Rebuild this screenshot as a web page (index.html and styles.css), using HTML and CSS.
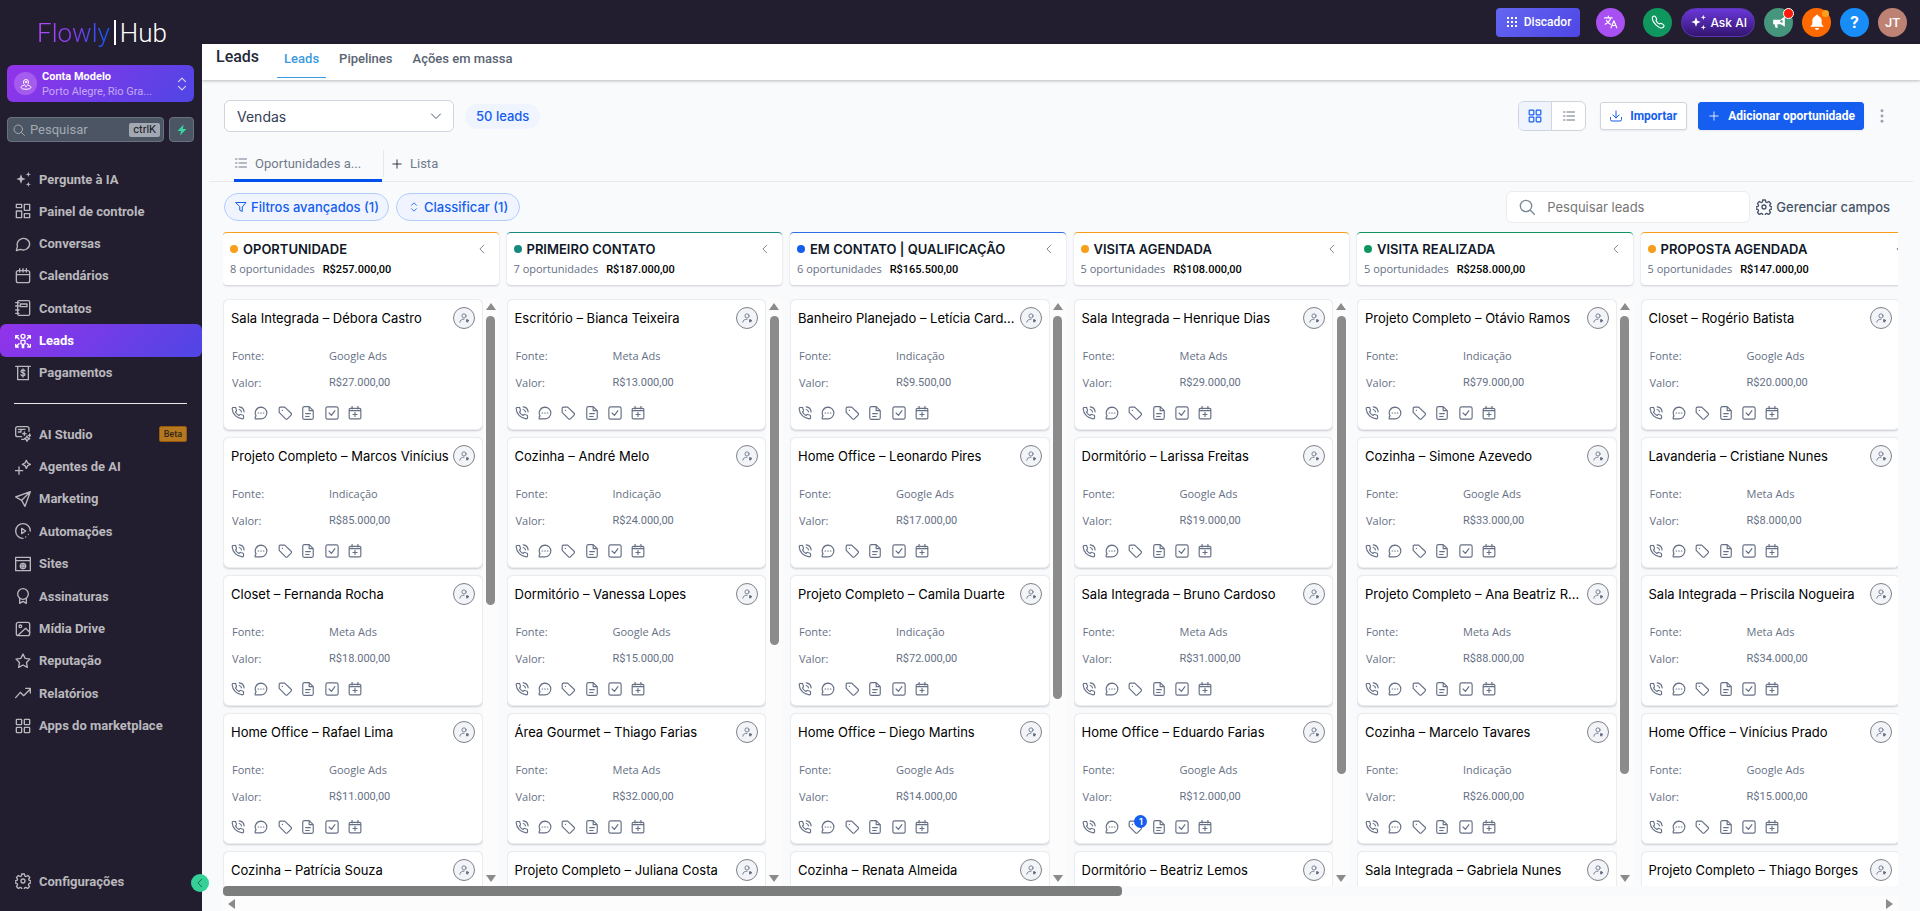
FILE: index.html
```html
<!DOCTYPE html>
<html lang="pt-br">
<head>
    <meta charset="UTF-8" />
    <meta name="viewport" content="width=device-width, initial-scale=1" />
    <title>Leads</title>
    <link rel="stylesheet" href="styles.css">
</head>
<body>
    <svg class="sprite" aria-hidden="true">
        <symbol id="i-sparkles" viewBox="0 0 24 24"><path class="solid" d="M9 5l2 5 5 2-5 2-2 5-2-5-5-2 5-2zM20 1l1 3 3 1-3 1-1 3-1-3-3-1 3-1zM20 16l1 3 3 1-3 1-1 3-1-3-3-1 3-1z"/></symbol>
        <symbol id="i-dashboard" viewBox="0 0 24 24"><path d="M2 2h8v5H2zM14 2h8v9h-8zM2 12h8v10H2zM14 16h8v6h-8z"/></symbol>
        <symbol id="i-chat" viewBox="0 0 24 24"><path d="M22 11.5a9.5 9.5 0 0 1-13.600 8.500L2 22l1.600-6A9.500 9.500 0 1 1 22 11.500z"/></symbol>
        <symbol id="i-calendar" viewBox="0 0 24 24"><path d="M5 4h14a3 3 0 0 1 3 3v12a3 3 0 0 1-3 3H5a3 3 0 0 1-3-3V7a3 3 0 0 1 3-3zM2 10h20M7 1v5M12 1v5M17 1v5"/></symbol>
        <symbol id="i-contacts" viewBox="0 0 24 24"><path d="M6 1h14a2 2 0 0 1 2 2v18a2 2 0 0 1-2 2H6a2 2 0 0 1-2-2V3a2 2 0 0 1 2-2zM8 6h10v4H8zM1 4h5M1 9h5M1 15h5M1 20h5"/></symbol>
        <symbol id="i-leads" viewBox="0 0 24 24"><circle cx="12" cy="5" r="3"/><path d="M9 11h6v5l-2 1v5h-2v-5l-2-1zM1 8V4h4M1 4l5 5M23 8V4h-4M23 4l-5 5M1 17v4h4M1 21l5-5M23 17v4h-4M23 21l-5-5"/></symbol>
        <symbol id="i-payments" viewBox="0 0 24 24"><path d="M1 2h22M4 2v20h16V2M15 9c-.5-1-1.500-1.500-3-1.500S9 8.300 9 9.600c0 3 6 1.600 6 4.500 0 1.300-1.200 2.200-3 2.200S9.500 15.600 9 14.500M12 6v12"/></symbol>
        <symbol id="i-studio" viewBox="0 0 24 24"><path d="M10 16H4a3 3 0 0 1-3-3V4a3 3 0 0 1 3-3h14a3 3 0 0 1 3 3v4M5 5h10M5 9h4v-4M18 15l1.300 2.700L22 19l-2.700 1.300L18 23l-1.300-2.700L14 19l2.700-1.300zM14 9v5M11.500 11.500h5M22 12v4M20 14h4M10 20h3"/></symbol>
        <symbol id="i-agents" viewBox="0 0 24 24"><path d="M17 2l2 4 4 2-4 2-2 4-2-4-4-2 4-2zM6 12v11M.500 17.500h11"/></symbol>
        <symbol id="i-send" viewBox="0 0 24 24"><path d="M23 1L1 9l9 5 5 9zM23 1L10 14"/></symbol>
        <symbol id="i-auto" viewBox="0 0 24 24"><path d="M12 23A11 11 0 1 1 23 12M10 8l6 4-6 4zM16 21l.1 0M20 17l.1 0"/></symbol>
        <symbol id="i-site" viewBox="0 0 24 24"><path d="M1 2h22v20H1zM1 7h22"/><circle cx="12" cy="15" r="4"/><path d="M8 15h8M12 11v8"/></symbol>
        <symbol id="i-award" viewBox="0 0 24 24"><circle cx="12" cy="9" r="8"/><path d="M7 16v7l5-3 5 3v-7"/></symbol>
        <symbol id="i-image" viewBox="0 0 24 24"><rect x="2" y="2" width="20" height="20" rx="3"/><circle cx="8" cy="8" r="2"/><path d="M5 21L16 11l6 6"/></symbol>
        <symbol id="i-star" viewBox="0 0 24 24"><path d="M12 1.500l3.200 6.600 7.300 1-5.300 5.100 1.300 7.300L12 18l-6.500 3.500 1.300-7.300L1.500 9.100l7.300-1z"/></symbol>
        <symbol id="i-trend" viewBox="0 0 24 24"><path d="M1 19l7-8 5 5L23 6M16 5h7v7"/></symbol>
        <symbol id="i-grid" viewBox="0 0 24 24"><rect x="2" y="2" width="8" height="8" rx="1"/><rect x="14" y="2" width="8" height="8" rx="1"/><rect x="2" y="14" width="8" height="8" rx="1"/><rect x="14" y="14" width="8" height="8" rx="1"/></symbol>
        <symbol id="i-gear" viewBox="0 0 24 24"><circle cx="12" cy="12" r="3"/><path d="M10 1.500h4l.7 3 2 .8 2.600-1.600 2.900 2.900-1.600 2.600.8 2 .1 0 2.500.8v3l-3 .7-.8 2 1.600 2.600-2.900 2.900-2.600-1.600-2 .8-.8 2.600h-3l-.8-2.600-2-.8-2.600 1.600-2.900-2.900 1.600-2.600-.8-2-3-.7v-3l3-.8.8-2-1.600-2.600 2.900-2.900 2.600 1.600 2-.8z"/></symbol>
        <symbol id="i-search" viewBox="0 0 24 24"><circle cx="10.500" cy="10.500" r="8.500"/><path d="M17 17l6 6"/></symbol>
        <symbol id="i-bolt" viewBox="0 0 24 24"><path class="solid" d="M15 1L3 14h7l-2 9L21 10h-7z"/></symbol>
        <symbol id="i-sort" viewBox="0 0 24 24"><path d="M6 8l6-6 6 6M6 16l6 6 6-6"/></symbol>
        <symbol id="i-pin" viewBox="0 0 24 24"><path d="M12 17c-3-3-5-5.500-5-9a5 5 0 0 1 10 0c0 3.500-2 6-5 9zM7 15c-3 .6-5 1.600-5 3.500C2 21 6 22.500 12 22.500s10-1.500 10-4c0-1.900-2-2.900-5-3.500"/><circle cx="12" cy="8" r="1.500"/></symbol>
        <symbol id="i-dots9" viewBox="0 0 24 24"><path class="solid" d="M2 2h4v4H2zM10 2h4v4h-4zM18 2h4v4h-4zM2 10h4v4H2zM10 10h4v4h-4zM18 10h4v4h-4zM2 18h4v4H2zM10 18h4v4h-4zM18 18h4v4h-4z"/></symbol>
        <symbol id="i-translate" viewBox="0 0 24 24"><path d="M1 5h13M7.500 2v3M11.500 5C10.500 9.500 6.500 13.500 2 16M4 9c1.500 3 4 5.500 7 7M12 22l5-12 5 12M14 18h6"/></symbol>
        <symbol id="i-phone" viewBox="0 0 24 24"><path d="M3 3c2-2 3.500-1.500 4.500 0l2 3c.8 1.300.3 2.200-.9 3.400 1 2.600 3.400 5 6 6 1.200-1.200 2.100-1.700 3.400-.9l3 2c1.500 1 2 2.500 0 4.500-2.500 2.500-8 .5-12.500-4S.5 5.500 3 3z"/></symbol>
        <symbol id="i-call" viewBox="0 0 24 24"><path d="M21.500 17.500v2.500a2 2 0 0 1-2.200 2A18.500 18.500 0 0 1 2 4.700 2 2 0 0 1 4 2.500h2.500a2 2 0 0 1 2 1.700l.8 2.900a2 2 0 0 1-.5 2L7.700 10.300a15 15 0 0 0 6 6l1.200-1.200a2 2 0 0 1 2-.5l2.900.8a2 2 0 0 1 1.700 2.100zM14 6a5 5 0 0 1 4 4M14 1.500a9.500 9.500 0 0 1 8.500 8.500"/></symbol>
        <symbol id="i-horn" viewBox="0 0 24 24"><path class="solid" d="M22 2v18l-7-4H9l1 6H6l-1.500-6H2V8h13z"/><path class="hole" d="M18 8.500v5l-4-1.500v-2z"/></symbol>
        <symbol id="i-bell" viewBox="0 0 24 24"><path class="solid" d="M12 1a2 2 0 0 1 2 2c3 1 5 3.500 5 7v5l3 4H2l3-4v-5c0-3.500 2-6 5-7a2 2 0 0 1 2-2zM9 21h6a3 3 0 0 1-6 0z"/></symbol>
        <symbol id="i-list" viewBox="0 0 24 24"><path d="M8 4h15M8 12h15M8 20h15M1 4h3M1 12h3M1 20h3"/></symbol>
        <symbol id="i-download" viewBox="0 0 24 24"><path d="M1 15v4a3 3 0 0 0 3 3h16a3 3 0 0 0 3-3v-4M12 2v14M6 10l6 6 6-6"/></symbol>
        <symbol id="i-plus" viewBox="0 0 24 24"><path d="M12 2v20M2 12h20"/></symbol>
        <symbol id="i-more" viewBox="0 0 24 24"><circle class="solid" cx="12" cy="3" r="2.500"/><circle class="solid" cx="12" cy="12" r="2.500"/><circle class="solid" cx="12" cy="21" r="2.500"/></symbol>
        <symbol id="i-filter" viewBox="0 0 24 24"><path d="M2 3h20l-7.500 9v9l-5-2.500V12z"/></symbol>
        <symbol id="i-down" viewBox="0 0 24 24"><path d="M3 8l9 9 9-9"/></symbol>
        <symbol id="i-left" viewBox="0 0 24 24"><path d="M16 3l-9 9 9 9"/></symbol>
        <symbol id="i-user" viewBox="0 0 24 24"><circle cx="12" cy="7" r="5"/><path d="M2 22c.5-5 4-7 10-7"/><path class="solid" d="M17 15h5v2h2v3h-2v2h-5z"/></symbol>
        <symbol id="i-comment" viewBox="0 0 24 24"><path d="M12 2a10 10 0 1 1 0 20H2v-3l1.500-2A10 10 0 0 1 12 2zM7 12h1M11.500 12h1M16 12h1"/></symbol>
        <symbol id="i-tag" viewBox="0 0 24 24"><path d="M2 4v7l11 11a2 2 0 0 0 3 0l6.500-6.500a2 2 0 0 0 0-3L11.500 2H4a2 2 0 0 0-2 2zM7.500 7.500h.1"/></symbol>
        <symbol id="i-note" viewBox="0 0 24 24"><path d="M14 1H6a3 3 0 0 0-3 3v16a3 3 0 0 0 3 3h12a3 3 0 0 0 3-3V8zM14 1v7h7M8 13h8M8 18h6"/></symbol>
        <symbol id="i-check" viewBox="0 0 24 24"><rect x="1.500" y="1.500" width="21" height="21" rx="3"/><path d="M7 12l4 4 6-8"/></symbol>
        <symbol id="i-event" viewBox="0 0 24 24"><path d="M4 4h16a2 2 0 0 1 2 2v14a2 2 0 0 1-2 2H4a2 2 0 0 1-2-2V6a2 2 0 0 1 2-2zM2 8h20M7 0v5M17 0v5M12 11v7M8.500 14.500h7"/></symbol>
    </svg>

    <aside class="sidebar">
        <a class="logo" href="#"><span class="logo-grad">Flowly</span><span class="logo-bar"></span><span>Hub</span></a>

        <button class="account" type="button">
            <span class="account-pin"><svg class="icon s12"><use href="#i-pin"/></svg></span>
            <span class="account-text"><b>Conta Modelo</b><small>Porto Alegre, Rio Gra...</small></span>
            <svg class="icon s14"><use href="#i-sort"/></svg>
        </button>

        <div class="side-search">
            <label class="side-field">
                <svg class="icon s12"><use href="#i-search"/></svg>
                <input type="text" placeholder="Pesquisar" aria-label="Pesquisar" />
                <kbd>ctrlK</kbd>
            </label>
            <button class="bolt" type="button" aria-label="Ações rápidas"><svg class="icon s12"><use href="#i-bolt"/></svg></button>
        </div>

        <nav class="menu menu-main">
            <a href="#"><svg class="icon s16"><use href="#i-sparkles"/></svg>Pergunte à IA</a>
            <a href="#"><svg class="icon s16"><use href="#i-dashboard"/></svg>Painel de controle</a>
            <a href="#"><svg class="icon s16"><use href="#i-chat"/></svg>Conversas</a>
            <a href="#"><svg class="icon s16"><use href="#i-calendar"/></svg>Calendários</a>
            <a href="#"><svg class="icon s16"><use href="#i-contacts"/></svg>Contatos</a>
            <a href="#" class="active"><svg class="icon s16"><use href="#i-leads"/></svg>Leads</a>
            <a href="#"><svg class="icon s16"><use href="#i-payments"/></svg>Pagamentos</a>
        </nav>
        <hr>
        <nav class="menu menu-tools">
            <a href="#"><svg class="icon s16"><use href="#i-studio"/></svg>AI Studio<span class="beta">Beta</span></a>
            <a href="#"><svg class="icon s16"><use href="#i-agents"/></svg>Agentes de AI</a>
            <a href="#"><svg class="icon s16"><use href="#i-send"/></svg>Marketing</a>
            <a href="#"><svg class="icon s16"><use href="#i-auto"/></svg>Automações</a>
            <a href="#"><svg class="icon s16"><use href="#i-site"/></svg>Sites</a>
            <a href="#"><svg class="icon s16"><use href="#i-award"/></svg>Assinaturas</a>
            <a href="#"><svg class="icon s16"><use href="#i-image"/></svg>Mídia Drive</a>
            <a href="#"><svg class="icon s16"><use href="#i-star"/></svg>Reputação</a>
            <a href="#"><svg class="icon s16"><use href="#i-trend"/></svg>Relatórios</a>
            <a href="#"><svg class="icon s16"><use href="#i-grid"/></svg>Apps do marketplace</a>
        </nav>
        <nav class="menu menu-bottom">
            <a href="#"><svg class="icon s16"><use href="#i-gear"/></svg>Configurações</a>
        </nav>
        <button class="collapse" type="button" aria-label="Recolher menu"><svg class="icon s10"><use href="#i-left"/></svg></button>
    </aside>

    <div class="page">
        <header class="topbar">
            <button class="dialer" type="button"><svg class="icon s12"><use href="#i-dots9"/></svg>Discador</button>
            <button class="round purple" type="button" aria-label="Idioma"><svg class="icon s14"><use href="#i-translate"/></svg></button>
            <button class="round green" type="button" aria-label="Telefone"><svg class="icon s14"><use href="#i-phone"/></svg></button>
            <button class="ask" type="button"><svg class="icon s16"><use href="#i-sparkles"/></svg>Ask AI</button>
            <button class="round teal" type="button" aria-label="Novidades"><svg class="icon s14"><use href="#i-horn"/></svg><i class="alert"></i></button>
            <button class="round orange" type="button" aria-label="Notificações"><svg class="icon s16"><use href="#i-bell"/></svg><i class="alert small"></i></button>
            <button class="round blue" type="button">?</button>
            <button class="round avatar" type="button">JT</button>
        </header>

        <div class="subnav">
            <h1>Leads</h1>
            <nav>
                <a href="#" class="active">Leads</a>
                <a href="#">Pipelines</a>
                <a href="#">Ações em massa</a>
            </nav>
        </div>

        <main>
            <div class="toolbar">
                <div class="pipeline">
                    <select aria-label="Pipeline"><option>Vendas</option></select>
                    <svg class="icon s12"><use href="#i-down"/></svg>
                </div>
                <span class="count">50 leads</span>
                <div class="toggle">
                    <button class="on" type="button" aria-label="Quadro"><svg class="icon s14"><use href="#i-grid"/></svg></button>
                    <button type="button" aria-label="Lista"><svg class="icon s12"><use href="#i-list"/></svg></button>
                </div>
                <button class="btn" type="button"><svg class="icon s12"><use href="#i-download"/></svg>Importar</button>
                <button class="btn primary" type="button"><svg class="icon s10"><use href="#i-plus"/></svg>Adicionar oportunidade</button>
                <button class="more" type="button" aria-label="Mais"><svg class="icon s14"><use href="#i-more"/></svg></button>
            </div>

            <div class="views">
                <a href="#" class="view active"><svg class="icon s12"><use href="#i-list"/></svg>Oportunidades a...</a>
                <a href="#" class="view"><svg class="icon s10"><use href="#i-plus"/></svg>Lista</a>
            </div>

            <div class="filters">
                <button class="chip" type="button"><svg class="icon s12"><use href="#i-filter"/></svg>Filtros avançados (1)</button>
                <button class="chip" type="button"><svg class="icon s10"><use href="#i-sort"/></svg>Classificar (1)</button>
                <label class="search">
                    <svg class="icon s16"><use href="#i-search"/></svg>
                    <input type="text" placeholder="Pesquisar leads" aria-label="Pesquisar leads" />
                </label>
                <button class="fields" type="button"><svg class="icon s16"><use href="#i-gear"/></svg>Gerenciar campos</button>
            </div>

            <div class="board" id="board"></div>
            <div class="hscroll">
                <div class="hthumb"></div>
                <div class="harrows"><i class="arrow left"></i><i class="arrow right"></i></div>
            </div>
        </main>
    </div>

    <script src="script.js"></script>
</body>
</html>
```

FILE: styles.css
```css
* {
    box-sizing: border-box;
}

body {
    margin: 0;
    height: 100vh;
    display: flex;
    overflow: hidden;
    background-color: #f9fafc;
    font-family: Inter, sans-serif;
    font-size: 13px;
    color: #101828;
}

button, input, select {
    font: inherit;
    color: inherit;
}

button {
    padding: 0;
    border: none;
    background: none;
    cursor: pointer;
}

a {
    color: inherit;
    text-decoration: none;
}

/* icons */
.sprite {
    position: absolute;
    width: 0;
    height: 0;
}

.icon {
    flex: none;
    fill: none;
    stroke: currentColor;
    stroke-width: 2;
    stroke-linecap: round;
    stroke-linejoin: round;
    overflow: visible;
}

.solid {
    fill: currentColor;
    stroke: none;
}

.hole {
    fill: #45967c;
    stroke: none;
}

.s10 { width: 10px; height: 10px; }
.s12 { width: 12px; height: 12px; }
.s14 { width: 14px; height: 14px; }
.s16 { width: 16px; height: 16px; }

/* sidebar */
.sidebar {
    position: relative;
    z-index: 2;
    flex: none;
    width: 202px;
    display: flex;
    flex-direction: column;
    background-color: #221e2f;
    color: #b9b8bd;
    font-family: Roboto, sans-serif;
}

.logo {
    display: flex;
    align-items: center;
    height: 65px;
    padding-left: 37px;
    font-size: 26px;
    font-weight: 300;
    color: #fff;
}

.logo-grad {
    background: linear-gradient(90deg, #b14cff, #8a3cf0 50%, #0a5cff);
    background-clip: text;
    color: transparent;
}

.logo-bar {
    width: 2px;
    height: 25px;
    margin: 0 4px;
    background-color: #fff;
}

.account {
    display: flex;
    align-items: center;
    height: 37px;
    margin: 0 8px 15px 7px;
    padding: 0 5px 0 7px;
    gap: 5px;
    border-radius: 6px;
    background: linear-gradient(135deg, #9333ea, #4f46e5);
    color: #dcd0fb;
    text-align: left;
}

.account-pin {
    display: flex;
    align-items: center;
    justify-content: center;
    width: 23px;
    height: 23px;
    border-radius: 50%;
    background-color: #a55cee;
    color: #fff;
}

.account-text {
    flex: 1;
    display: flex;
    flex-direction: column;
    font-size: 11px;
    line-height: 15px;
}

.account-text b {
    color: #fff;
}

.account-text small {
    font-size: 11px;
    color: #c5a9f5;
}

.side-search {
    display: flex;
    gap: 5px;
    margin: 0 8px 21px 7px;
}

.side-field, .bolt {
    display: flex;
    align-items: center;
    height: 25px;
    border: 1px solid #67737e;
    border-radius: 4px;
    background-color: #4b5563;
}

.side-field {
    flex: 1;
    min-width: 0;
    padding: 0 3px 0 5px;
    gap: 5px;
    color: #a3aab4;
}

.side-field input {
    flex: 1;
    min-width: 0;
    padding: 0;
    border: none;
    outline: none;
    background: none;
}

.side-field input::placeholder {
    color: #a3aab4;
}

kbd {
    padding: 0 4px;
    border-radius: 2px;
    background-color: #a3a9b3;
    color: #15171c;
    font-family: inherit;
    font-size: 11px;
    line-height: 14px;
}

.bolt {
    flex: none;
    justify-content: center;
    width: 25px;
    color: #37d5a0;
}

.menu {
    display: grid;
    grid-auto-rows: 1fr;
    font-size: 13px;
    font-weight: 700;
}

.menu-main {
    height: 226px;
}

.menu-tools {
    height: 324px;
}

.menu-bottom {
    height: 32px;
    margin: auto 0 14px;
}

.menu a {
    display: flex;
    align-items: center;
    gap: 8px;
    padding: 0 15px;
    border-radius: 6px;
}

.menu .active {
    background: linear-gradient(135deg, #9333ea, #4f46e5);
    color: #fff;
}

.beta {
    margin-left: auto;
    padding: 0 4px;
    border: 1px solid #99560f;
    border-radius: 2px;
    background-color: #b7791f;
    color: #33261a;
    font-size: 9px;
    font-weight: 500;
    line-height: 14px;
}

hr {
    width: 173px;
    margin: 14px;
    border: none;
    border-top: 1px solid #e9e9ec;
}

.collapse {
    position: absolute;
    right: -7px;
    bottom: 19px;
    display: flex;
    align-items: center;
    justify-content: center;
    width: 18px;
    height: 18px;
    border-radius: 50%;
    background-color: #35cf98;
    color: #135740;
}

/* top */
.page {
    flex: 1;
    min-width: 0;
    display: flex;
    flex-direction: column;
}

.topbar {
    flex: none;
    display: flex;
    align-items: center;
    justify-content: flex-end;
    gap: 9px;
    height: 44px;
    padding-right: 13px;
    background-color: #221e2f;
    color: #fff;
    font-family: Roboto, sans-serif;
}

.dialer {
    display: flex;
    align-items: center;
    gap: 6px;
    height: 29px;
    margin-right: 7px;
    padding: 0 9px 0 10px;
    border-radius: 4px;
    background: linear-gradient(135deg, #6366f1, #4f46e5);
    font-size: 12px;
    font-weight: 500;
}

.round {
    position: relative;
    display: flex;
    align-items: center;
    justify-content: center;
    width: 29px;
    height: 29px;
    border-radius: 50%;
}

.purple { background-color: #a850f2; margin-right: 9px; }
.green { background-color: #10965f; }
.teal { background-color: #45967c; }
.orange { background-color: #ff6a00; }
.blue { background-color: #188df8; font-size: 17px; font-weight: 700; }
.avatar { background-color: #bd8273; font-size: 13px; font-weight: 500; }

.alert {
    position: absolute;
    top: 0;
    right: -1px;
    width: 11px;
    height: 11px;
    border: 1px solid #fff;
    border-radius: 50%;
    background-color: #ff1a0d;
}

.alert.small {
    top: 2px;
    right: 2px;
    width: 7px;
    height: 7px;
    border: none;
    background-color: #f9a21b;
}

.ask {
    display: flex;
    align-items: center;
    gap: 4px;
    height: 29px;
    padding: 0 7px 0 8px;
    border: 1px solid #5b35b5;
    border-radius: 15px;
    background: linear-gradient(#6a38d8, #33156f);
    font-family: Inter, sans-serif;
    font-size: 12px;
    font-weight: 500;
}

.subnav {
    flex: none;
    position: relative;
    display: flex;
    height: 36px;
    padding-left: 14px;
    background-color: #fff;
    box-shadow: 0 1px 3px rgba(0, 0, 0, 0.25);
    font-family: Roboto, sans-serif;
}

h1 {
    margin: 0 18px 0 0;
    font-size: 16px;
    font-weight: 500;
    line-height: 25px;
    color: #1f2937;
}

.subnav nav {
    display: flex;
    gap: 6px;
    font-weight: 500;
    line-height: 30px;
    color: #5a6472;
}

.subnav nav a {
    height: 34px;
    padding: 0 7px;
}

.subnav nav .active {
    border-bottom: 1px solid #3b9ae1;
    color: #3b9ae1;
}

/* content */
main {
    flex: 1;
    min-height: 0;
    display: flex;
    flex-direction: column;
}

.toolbar {
    display: flex;
    align-items: center;
    height: 30px;
    margin: 21px 31px 17px 22px;
}

.pipeline {
    display: flex;
    align-items: center;
    width: 230px;
    color: #475467;
}

.pipeline select {
    flex: 1;
    height: 32px;
    margin-right: -24px;
    padding: 0 12px;
    appearance: none;
    border: 1px solid #d0d5dd;
    border-radius: 6px;
    background-color: #fff;
    font-size: 14px;
    color: #344054;
}

.pipeline .icon {
    position: relative;
    margin-right: 12px;
}

.count {
    margin: 0 auto 0 11px;
    padding: 0 11px;
    border-radius: 13px;
    background-color: #eff4ff;
    color: #155eef;
    font-weight: 500;
    line-height: 25px;
}

.toggle {
    display: flex;
    height: 30px;
    margin-right: 14px;
    border: 1px solid #d0d5dd;
    border-radius: 6px;
    background-color: #fff;
    color: #667085;
    overflow: hidden;
}

.toggle button {
    display: flex;
    align-items: center;
    justify-content: center;
    width: 33px;
}

.toggle .on {
    border-right: 1px solid #d0d5dd;
    background-color: #eff4ff;
    color: #155eef;
}

.btn {
    display: flex;
    align-items: center;
    gap: 8px;
    height: 28px;
    margin-right: 11px;
    padding: 0 9px;
    border: 1px solid #d0d5dd;
    border-radius: 3px;
    background-color: #fff;
    box-shadow: 0 1px 2px rgba(16, 24, 40, 0.08);
    color: #155eef;
    font-family: Roboto, sans-serif;
    font-size: 12px;
    font-weight: 700;
}

.btn.primary {
    gap: 9px;
    padding: 0 8px 0 10px;
    border-color: #155eef;
    background-color: #155eef;
    color: #fff;
}

.more {
    display: flex;
    width: 14px;
    color: #98a2b3;
}

.views {
    display: flex;
    height: 34px;
    margin: 0 7px;
    padding-left: 25px;
    border-bottom: 1px solid #e7e9ed;
    color: #6f7a8b;
    font-family: Roboto, sans-serif;
}

.view {
    display: flex;
    align-items: center;
    gap: 8px;
    height: 34px;
    font-size: 13px;
}

.view.active {
    width: 148px;
    padding: 0 0 1px 1px;
    border-bottom: 3px solid #004eeb;
}

.view + .view {
    height: 27px;
    margin: 2px 0 0 1px;
    padding: 0 8px;
    border-left: 1px solid #e4e7ec;
}

.view + .view .icon {
    color: #101828;
}

.filters {
    display: flex;
    align-items: center;
    height: 32px;
    margin: 9px 30px 9px 22px;
    font-weight: 500;
}

.chip {
    display: flex;
    align-items: center;
    gap: 4px;
    height: 28px;
    margin-right: 7px;
    padding: 0 9px 0 10px;
    border: 1px solid #b2ccff;
    border-radius: 14px;
    background-color: #eff4ff;
    color: #155eef;
    font-weight: 500;
}

.chip + .chip {
    gap: 5px;
    padding: 0 11px 0 12px;
}

.search {
    display: flex;
    align-items: center;
    gap: 12px;
    width: 244px;
    height: 32px;
    margin: 0 6px 0 auto;
    padding: 0 12px;
    border: 1px solid #eaecf0;
    border-radius: 6px;
    background-color: #fff;
    color: #7b8794;
    font-weight: 400;
}

.search input {
    flex: 1;
    min-width: 0;
    padding: 0;
    border: none;
    outline: none;
    background: none;
}

.search input::placeholder {
    color: #757575;
}

.fields {
    display: flex;
    align-items: center;
    gap: 4px;
    color: #475467;
    font-weight: 500;
}

/* board */
.board {
    flex: 1;
    min-height: 0;
    display: flex;
    gap: 8px;
    margin: 0 22px 0 21px;
    overflow: hidden;
}

.column {
    flex: 0 0 calc((100% - 22px) / 6);
    min-width: 0;
    display: flex;
    flex-direction: column;
    gap: 14px;
}

.column-head {
    flex: none;
    height: 53px;
    padding: 6px 12px 0 7px;
    border-top: 1px solid #f79e1b;
    border-radius: 4px;
    background-color: #fff;
    box-shadow: 0 1px 2px rgba(16, 24, 40, 0.2);
    font-family: "Open Sans", sans-serif;
    font-size: 11px;
    color: #667085;
}

.column-head h2 {
    display: flex;
    align-items: center;
    margin: 0;
    font-family: Inter, sans-serif;
    font-size: 13px;
    font-weight: 600;
    line-height: 20px;
    color: #101828;
}

.column-head h2::before {
    content: "";
    width: 8px;
    height: 8px;
    margin-right: 5px;
    border-radius: 50%;
    background-color: #f79e1b;
}

.column-head button {
    display: flex;
    margin-left: auto;
    color: #667085;
}

.column-head p {
    margin: 0;
    line-height: 20px;
}

.column-head b {
    margin-left: 5px;
    font-family: Roboto, sans-serif;
    font-weight: 500;
    color: #000;
}

.column.c-teal .column-head { border-color: #17897f; }
.column.c-teal h2::before { background-color: #17897f; }
.column.c-blue .column-head { border-color: #2f6fe4; }
.column.c-blue h2::before { background-color: #155eef; }
.column.c-green .column-head { border-color: #0f9560; }
.column.c-green h2::before { background-color: #0f9560; }

.column-body {
    flex: 1;
    min-height: 0;
    display: flex;
}

.cards {
    flex: 1;
    min-width: 0;
    display: flex;
    flex-direction: column;
    gap: 7px;
    overflow: hidden;
}

.card {
    flex: none;
    height: 131px;
    padding: 7px 7px 0;
    border: 1px solid #eaecf0;
    border-radius: 6px;
    background-color: #fff;
    box-shadow: 0 1px 2px rgba(16, 24, 40, 0.2);
    font-family: "Open Sans", sans-serif;
    font-size: 11px;
    color: #667085;
}

.card header {
    display: flex;
    align-items: center;
    justify-content: space-between;
    height: 22px;
    margin-bottom: 13px;
}

.card h3 {
    margin: 0;
    white-space: nowrap;
    font-family: Inter, sans-serif;
    font-size: 13px;
    font-weight: 400;
    color: #000;
}

.owner {
    flex: none;
    display: flex;
    align-items: center;
    justify-content: center;
    width: 22px;
    height: 22px;
    border: 1px solid #7d828a;
    border-radius: 50%;
    background-color: #f2f4f7;
    color: #667085;
}

.card dl {
    display: grid;
    grid-template-columns: 97px 1fr;
    margin: 0 0 10px 1px;
    line-height: 27px;
}

.card dt {
    font-weight: 500;
}

.card dd {
    margin: 0;
}

.card .money {
    font-family: Roboto, sans-serif;
}

.actions {
    display: flex;
    justify-content: space-between;
    width: 131px;
}

.actions button {
    position: relative;
    display: flex;
}

.badge {
    position: absolute;
    top: -5px;
    left: 6px;
    width: 13px;
    height: 13px;
    border-radius: 50%;
    background-color: #155eef;
    color: #fff;
    font: 600 9px/13px Inter, sans-serif;
}

/* scrollbars */
.vscroll {
    flex: none;
    display: flex;
    flex-direction: column;
    align-items: center;
    width: 16px;
    padding: 4px 0;
    background-color: #fcfcfc;
}

.vthumb {
    width: 9px;
    margin: 6px 0 auto;
    border-radius: 5px;
    background-color: #8b8b8b;
}

.arrow {
    border: 5px solid transparent;
}

.arrow.up {
    border-top: none;
    border-bottom: 7px solid #8b8b8b;
}

.arrow.down {
    border-bottom: none;
    border-top: 7px solid #8b8b8b;
}

.arrow.left {
    border-left: none;
    border-right: 7px solid #8b8b8b;
}

.arrow.right {
    border-right: none;
    border-left: 7px solid #8b8b8b;
}

.hscroll {
    flex: none;
    margin: 0 22px 0 21px;
}

.hthumb {
    width: 53.7%;
    height: 10px;
    border-radius: 4px;
    background-color: #7c7d7d;
}

.harrows {
    display: flex;
    align-items: center;
    justify-content: space-between;
    height: 15px;
    padding: 0 5px;
    background-color: #fcfcfc;
}
```

FILE: script.js
```js
// thumb: height of the scrollbar thumb, relative to the column list
const columns = [
    { name: "OPORTUNIDADE", color: "orange", count: 8, total: "257.000,00", thumb: 289, cards: [
        ["Sala Integrada – Débora Castro", "Google Ads", "27.000,00"],
        ["Projeto Completo – Marcos Vinícius", "Indicação", "85.000,00"],
        ["Closet – Fernanda Rocha", "Meta Ads", "18.000,00"],
        ["Home Office – Rafael Lima", "Google Ads", "11.000,00"],
        ["Cozinha – Patrícia Souza", "", ""]
    ] },
    { name: "PRIMEIRO CONTATO", color: "teal", count: 7, total: "187.000,00", thumb: 329, cards: [
        ["Escritório – Bianca Teixeira", "Meta Ads", "13.000,00"],
        ["Cozinha – André Melo", "Indicação", "24.000,00"],
        ["Dormitório – Vanessa Lopes", "Google Ads", "15.000,00"],
        ["Área Gourmet – Thiago Farias", "Meta Ads", "32.000,00"],
        ["Projeto Completo – Juliana Costa", "", ""]
    ] },
    { name: "EM CONTATO | QUALIFICAÇÃO", color: "blue", count: 6, total: "165.500,00", thumb: 383, cards: [
        ["Banheiro Planejado – Letícia Card...", "Indicação", "9.500,00"],
        ["Home Office – Leonardo Pires", "Google Ads", "17.000,00"],
        ["Projeto Completo – Camila Duarte", "Indicação", "72.000,00"],
        ["Home Office – Diego Martins", "Google Ads", "14.000,00"],
        ["Cozinha – Renata Almeida", "", ""]
    ] },
    { name: "VISITA AGENDADA", color: "orange", count: 5, total: "108.000,00", thumb: 458, cards: [
        ["Sala Integrada – Henrique Dias", "Meta Ads", "29.000,00"],
        ["Dormitório – Larissa Freitas", "Google Ads", "19.000,00"],
        ["Sala Integrada – Bruno Cardoso", "Meta Ads", "31.000,00"],
        ["Home Office – Eduardo Farias", "Google Ads", "12.000,00", 1],
        ["Dormitório – Beatriz Lemos", "", ""]
    ] },
    { name: "VISITA REALIZADA", color: "green", count: 5, total: "258.000,00", thumb: 458, cards: [
        ["Projeto Completo – Otávio Ramos", "Indicação", "79.000,00"],
        ["Cozinha – Simone Azevedo", "Google Ads", "33.000,00"],
        ["Projeto Completo – Ana Beatriz R...", "Meta Ads", "88.000,00"],
        ["Cozinha – Marcelo Tavares", "Indicação", "26.000,00"],
        ["Sala Integrada – Gabriela Nunes", "", ""]
    ] },
    { name: "PROPOSTA AGENDADA", color: "orange", count: 5, total: "147.000,00", thumb: 458, cards: [
        ["Closet – Rogério Batista", "Google Ads", "20.000,00"],
        ["Lavanderia – Cristiane Nunes", "Meta Ads", "8.000,00"],
        ["Sala Integrada – Priscila Nogueira", "Meta Ads", "34.000,00"],
        ["Home Office – Vinícius Prado", "Google Ads", "15.000,00"],
        ["Projeto Completo – Thiago Borges", "", ""]
    ] }
];

const actions = [
    ["call", "Ligar"], ["comment", "Mensagem"], ["tag", "Tags"],
    ["note", "Notas"], ["check", "Tarefas"], ["event", "Agendar"]
];

function icon(name, size) {
    return `<svg class="icon ${size}"><use href="#i-${name}"/></svg>`;
}

function renderCard([title, source, value, tags]) {
    const details = source ? `
        <dl>
            <dt>Fonte:</dt><dd>${source}</dd>
            <dt>Valor:</dt><dd class="money">R$${value}</dd>
        </dl>
        <div class="actions">
            ${actions.map(([name, label]) => `<button type="button" aria-label="${label}">${icon(name, "s14")}${name === "tag" && tags ? `<span class="badge">${tags}</span>` : ""}</button>`).join("")}
        </div>` : "";

    return `
        <article class="card">
            <header>
                <h3>${title}</h3>
                <button class="owner" type="button" aria-label="Responsável">${icon("user", "s10")}</button>
            </header>${details}
        </article>`;
}

function renderColumn(col) {
    return `
        <section class="column c-${col.color}">
            <div class="column-head">
                <h2>${col.name}<button type="button" aria-label="Recolher">${icon("left", "s10")}</button></h2>
                <p>${col.count} oportunidades <b>R$${col.total}</b></p>
            </div>
            <div class="column-body">
                <div class="cards">${col.cards.map(renderCard).join("")}</div>
                <div class="vscroll">
                    <i class="arrow up"></i>
                    <div class="vthumb" style="height: ${col.thumb}px"></div>
                    <i class="arrow down"></i>
                </div>
            </div>
        </section>`;
}

document.getElementById("board").innerHTML = columns.map(renderColumn).join("");
```
